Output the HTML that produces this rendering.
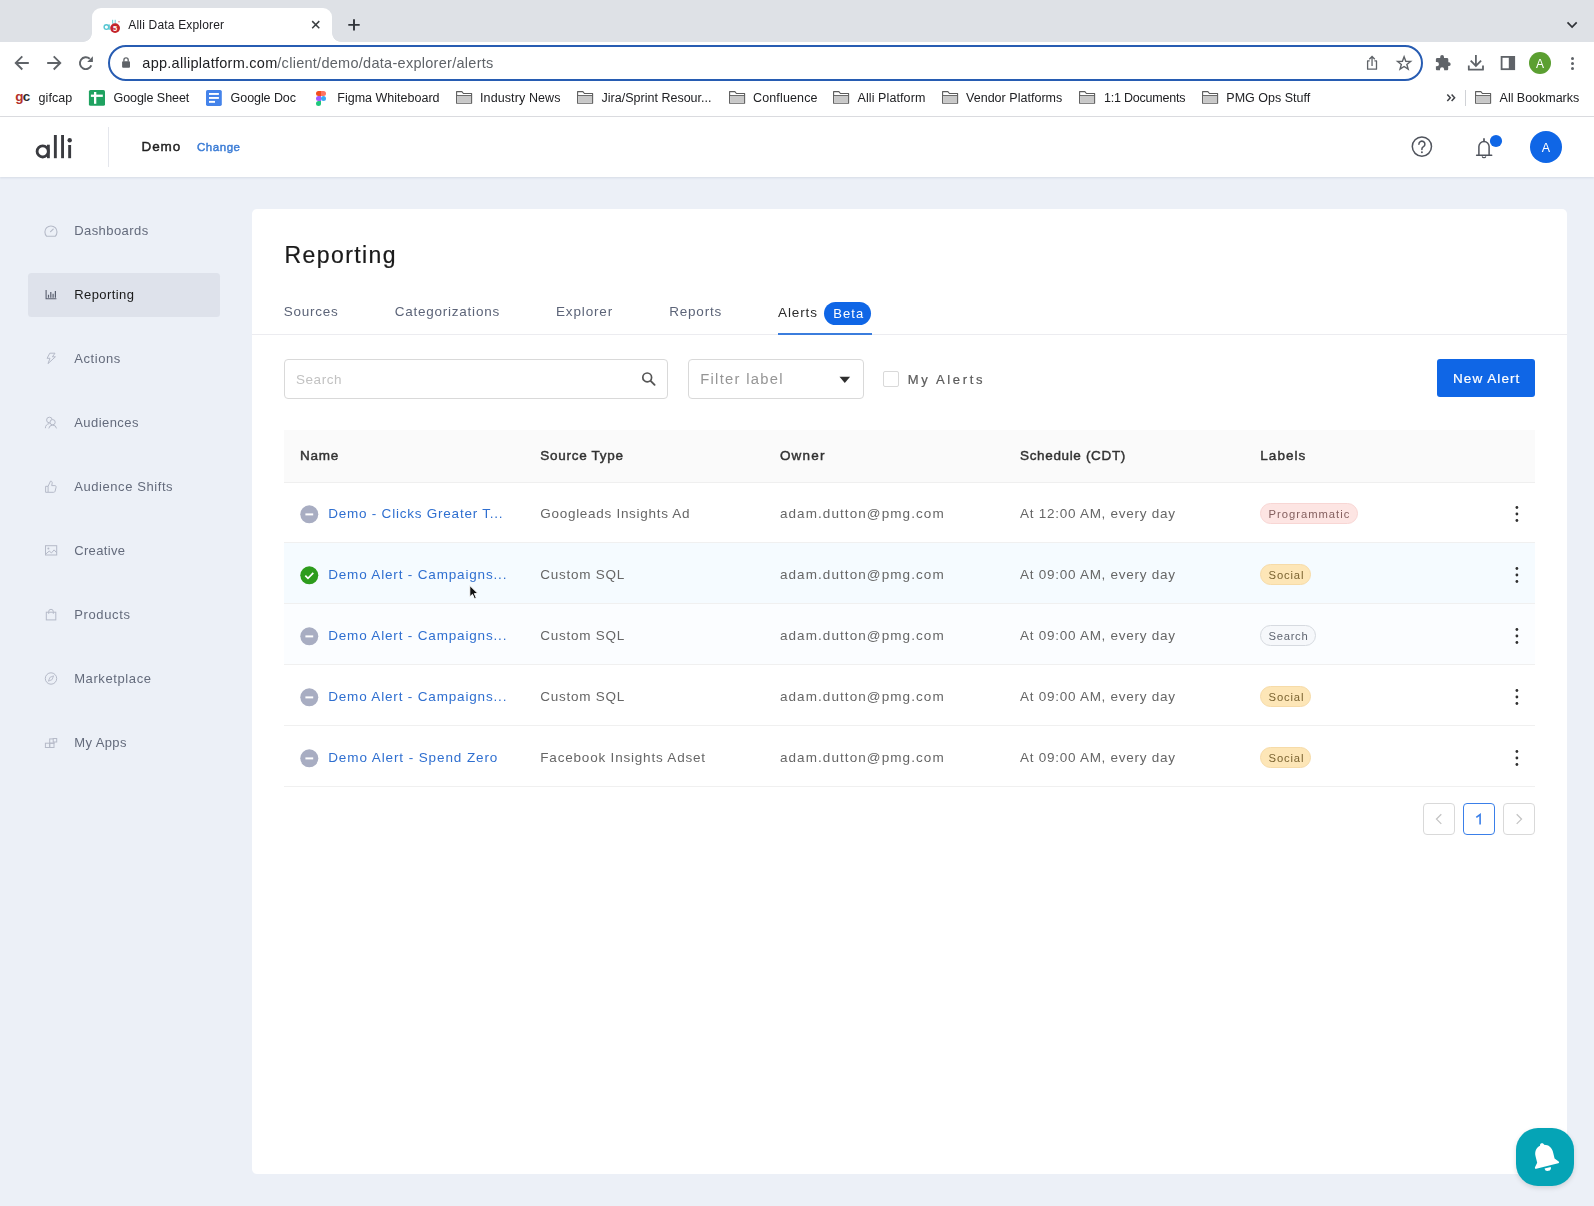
<!DOCTYPE html>
<html><head><meta charset="utf-8">
<style>
*{box-sizing:border-box;margin:0;padding:0}
html,body{width:1594px;height:1206px;overflow:hidden}
body{font-family:"Liberation Sans",sans-serif;background:#ecf0f7;position:relative;color:#202124}
.abs,.t,svg.i{position:absolute}
.t{white-space:pre}
/* chrome */
#tabstrip{left:0;top:0;width:1594px;height:42px;background:#dee1e6}
#tab{left:92px;top:8px;width:240px;height:34px;background:#fff;border-radius:9px 9px 0 0}
#tab:before,#tab:after{content:"";position:absolute;bottom:0;width:9px;height:9px}
#tab:before{left:-9px;background:radial-gradient(circle at 0 0,rgba(255,255,255,0) 8.5px,#fff 9.2px)}
#tab:after{right:-9px;background:radial-gradient(circle at 100% 0,rgba(255,255,255,0) 8.5px,#fff 9.2px)}
#toolbar{left:0;top:41.5px;width:1594px;height:43px;background:#fff}
#omni{left:107.5px;top:45px;width:1315.5px;height:35.5px;border:2px solid #275cb2;border-radius:18px;background:#fff}
#bmbar{left:0;top:84px;width:1594px;height:33px;background:#fff;border-bottom:1px solid #dcdde0}
/* app */
#hdr{left:0;top:117px;width:1594px;height:60px;background:#fff;box-shadow:0 1px 2px rgba(70,85,120,.13)}
#card{left:252px;top:209px;width:1315px;height:964.5px;background:#fff;border-radius:5px}
#sbact{left:28px;top:273px;width:192px;height:44px;background:#dee2eb;border-radius:3.5px}
.box{border:1px solid #d9d9d9;border-radius:4px;background:#fff}
#thead{left:284px;top:429.5px;width:1250.6px;height:53px;background:#fafafa;border-bottom:1px solid #efefef}
.row{left:284px;width:1250.6px;height:61px;border-bottom:1px solid #f0f0f0}
.tag{height:21.6px;border-radius:11px}
#txt{position:absolute;left:0;top:0;width:1594px;height:1206px;will-change:transform}
.pg{width:32px;height:32px;top:802.7px;border:1px solid #d9d9d9;border-radius:4px;background:#fff}
</style></head><body>
<!-- ===== CHROME ===== -->
<div id="tabstrip" class="abs"></div>
<div id="tab" class="abs"></div>
<div id="toolbar" class="abs"></div>
<div id="omni" class="abs"></div>
<div id="bmbar" class="abs"></div>
<svg class="i" style="left:102px;top:14px" width="20" height="20" viewBox="102 14 20 20">
 <circle cx="106.400" cy="27.100" r="2.300" fill="none" stroke="#56c6d2" stroke-width="1.400"/><rect x="108.500" y="24.400" width="1.300" height="5.400" fill="#56c6d2"/>
 <rect x="112" y="19.800" width="1.200" height="4" fill="#7ed4dc"/><rect x="114.600" y="19.800" width="1.200" height="4" fill="#7ed4dc"/><circle cx="119" cy="21.700" r=".75" fill="#d77"/>
 <circle cx="115.100" cy="28.100" r="4.900" fill="#c4242a"/>
 <text x="115.100" y="30.900" font-family="Liberation Sans,sans-serif" font-size="7.500" font-weight="700" fill="#fff" text-anchor="middle">5</text>
</svg>
<svg class="i" style="left:309px;top:18px" width="14" height="14" viewBox="0 0 14 14"><path d="M3.2 3.100l7.100 7.100M10.300 3.100l-7.100 7.100" stroke="#3c4043" stroke-width="1.500" stroke-linecap="butt"/></svg>
<svg class="i" style="left:345.5px;top:17px" width="16" height="16" viewBox="0 0 16 16"><path d="M8 2.200v11.400M2.300 7.900h11.400" stroke="#30343a" stroke-width="1.900"/></svg>
<svg class="i" style="left:1564px;top:18px" width="16" height="14" viewBox="1564 18 16 14"><path d="M1567.500 22.400l4.600 4.600 4.600-4.600" fill="none" stroke="#2f3237" stroke-width="1.700"/></svg>
<svg class="i" style="left:12px;top:53px" width="20" height="20" viewBox="12 53 20 20"><path d="M28.800 62.950h-12.600M22.300 56.400l-6.550 6.550 6.550 6.550" fill="none" stroke="#5f6368" stroke-width="1.900"/></svg>
<svg class="i" style="left:44px;top:53px" width="20" height="20" viewBox="44 53 20 20"><path d="M47.200 62.950h12.600M53.700 56.400l6.550 6.550-6.550 6.550" fill="none" stroke="#5f6368" stroke-width="1.900"/></svg>
<svg class="i" style="left:76px;top:53px" width="20" height="20" viewBox="76 53 20 20"><path d="M91.300 65.400a5.900 5.900 0 1 1-1.500-6.600" fill="none" stroke="#5f6368" stroke-width="1.900"/><path d="M92.900 56.200v5.700h-5.700z" fill="#5f6368"/></svg>
<svg class="i" style="left:120px;top:55px" width="12" height="14" viewBox="120 55 12 14"><rect x="122.100" y="61.200" width="7.900" height="6.600" rx="1" fill="#5f6368"/><path d="M123.900 61.500v-1.500a2.150 2.150 0 0 1 4.300 0v1.500" fill="none" stroke="#5f6368" stroke-width="1.300"/></svg>
<svg class="i" style="left:1364px;top:54px" width="16" height="18" viewBox="1364 54 16 18"><path d="M1369.700 60.900h-2.100v8.300h8.900v-8.300h-2.100" fill="none" stroke="#5f6368" stroke-width="1.300" stroke-linejoin="round"/><path d="M1372.050 66v-9.300M1369.300 59.200l2.750-2.750 2.750 2.750" fill="none" stroke="#5f6368" stroke-width="1.300"/></svg>
<svg class="i" style="left:1395px;top:54px" width="18" height="18" viewBox="1395 54 18 18"><polygon points="1404.10,56.70 1405.80,61.25 1410.66,61.47 1406.86,64.50 1408.16,69.18 1404.10,66.50 1400.04,69.18 1401.34,64.50 1397.54,61.47 1402.40,61.25" fill="none" stroke="#5f6368" stroke-width="1.400" stroke-linejoin="miter"/></svg>
<svg class="i" style="left:1435px;top:54px" width="18" height="18" viewBox="1435 54 18 18"><path fill="#5f6368" d="M1449.300 62.300h-1v-2.900c0-.8-.6-1.400-1.400-1.400h-2.900v-1a1.900 1.900 0 0 0-3.800 0v1h-2.900c-.8 0-1.400.6-1.400 1.400v2.700h1a2.050 2.050 0 0 1 0 4.100h-1v2.700c0 .8.600 1.400 1.400 1.400h2.700v-1a2.050 2.050 0 0 1 4.100 0v1h2.700c.8 0 1.400-.6 1.400-1.400v-2.900h1a1.900 1.900 0 0 0 0-3.700z"/></svg>
<svg class="i" style="left:1466px;top:53px" width="20" height="20" viewBox="1466 53 20 20"><path d="M1475.900 55.100v10.600M1470.700 60.700l5.200 5.200 5.200-5.200" fill="none" stroke="#5f6368" stroke-width="1.800"/><path d="M1468.800 65.600v4.100h14.200v-4.100" fill="none" stroke="#5f6368" stroke-width="1.800" stroke-linejoin="round"/></svg>
<svg class="i" style="left:1499px;top:54px" width="18" height="18" viewBox="1499 54 18 18"><rect x="1501.600" y="56.900" width="12.600" height="12.300" fill="none" stroke="#5f6368" stroke-width="1.800"/><rect x="1508.800" y="56.900" width="5.400" height="12.300" fill="#5f6368"/></svg>
<div class="abs" style="left:1529px;top:51.800px;width:22.200px;height:22.200px;border-radius:50%;background:#5b9f31"></div>
<svg class="i" style="left:1568px;top:54px" width="10" height="18" viewBox="1568 54 10 18"><circle cx="1572.500" cy="58.400" r="1.500" fill="#5f6368"/><circle cx="1572.500" cy="63.500" r="1.500" fill="#5f6368"/><circle cx="1572.500" cy="68.600" r="1.500" fill="#5f6368"/></svg>
<div class="t" style="left:15.200px;top:89.700px;font-size:13.500px;line-height:14px;font-weight:700;letter-spacing:-0.600px;color:#2b2b2b"><span style="color:#b3302b">g</span>c</div>
<svg class="i" style="left:88px;top:89px" width="18" height="18" viewBox="88 89 18 18"><rect x="88.900" y="90" width="16.100" height="15.800" rx="1.600" fill="#1fa260"/><rect x="94" y="92" width="2.300" height="11.800" fill="#fff"/><rect x="90.900" y="94.600" width="11.900" height="2.300" fill="#fff"/></svg>
<svg class="i" style="left:205px;top:89px" width="18" height="18" viewBox="205 89 18 18"><rect x="206" y="89.900" width="15.800" height="16" rx="1.600" fill="#4483ea"/><rect x="209" y="93" width="9.900" height="1.900" fill="#fff"/><rect x="209" y="97" width="9.900" height="1.900" fill="#fff"/><rect x="209" y="100.900" width="6" height="1.900" fill="#fff"/></svg>
<svg class="i" style="left:315px;top:90px" width="12" height="17" viewBox="315 90 12 17">
<path d="M1321 91h-2.500a2.500 2.500 0 0 0 0 5h2.500z" transform="translate(-1000 0)" fill="#f24e1e"/>
<path d="M1321 91h2.500a2.500 2.500 0 0 1 0 5h-2.500z" transform="translate(-1000 0)" fill="#ff7262"/>
<path d="M1321 96h-2.500a2.500 2.500 0 0 0 0 5h2.500z" transform="translate(-1000 0)" fill="#a259ff"/>
<circle cx="323.500" cy="98.500" r="2.500" fill="#3aa8f5"/>
<path d="M1321 101h-2.500a2.500 2.500 0 1 0 2.500 2.500z" transform="translate(-1000 0)" fill="#1fc77c"/>
</svg>
<svg class="i" style="left:455.8px;top:90px" width="17" height="15" viewBox="0 0 17 15"><path d="M.6 13.200v-11.600h5.300l1.500 1.900h8.200v9.700z" fill="#fff" stroke="#5c5c5c" stroke-width="1.100" stroke-linejoin="round"/><rect x="1.150" y="5.700" width="13.900" height="7" fill="#c8c8c8"/><path d="M.6 5.500h15" stroke="#5c5c5c" stroke-width=".9"/></svg>
<svg class="i" style="left:577.0px;top:90px" width="17" height="15" viewBox="0 0 17 15"><path d="M.6 13.200v-11.600h5.300l1.500 1.900h8.200v9.700z" fill="#fff" stroke="#5c5c5c" stroke-width="1.100" stroke-linejoin="round"/><rect x="1.150" y="5.700" width="13.900" height="7" fill="#c8c8c8"/><path d="M.6 5.500h15" stroke="#5c5c5c" stroke-width=".9"/></svg>
<svg class="i" style="left:729.0px;top:90px" width="17" height="15" viewBox="0 0 17 15"><path d="M.6 13.200v-11.600h5.300l1.500 1.900h8.200v9.700z" fill="#fff" stroke="#5c5c5c" stroke-width="1.100" stroke-linejoin="round"/><rect x="1.150" y="5.700" width="13.900" height="7" fill="#c8c8c8"/><path d="M.6 5.500h15" stroke="#5c5c5c" stroke-width=".9"/></svg>
<svg class="i" style="left:833.0px;top:90px" width="17" height="15" viewBox="0 0 17 15"><path d="M.6 13.200v-11.600h5.300l1.500 1.900h8.200v9.700z" fill="#fff" stroke="#5c5c5c" stroke-width="1.100" stroke-linejoin="round"/><rect x="1.150" y="5.700" width="13.900" height="7" fill="#c8c8c8"/><path d="M.6 5.500h15" stroke="#5c5c5c" stroke-width=".9"/></svg>
<svg class="i" style="left:942.0px;top:90px" width="17" height="15" viewBox="0 0 17 15"><path d="M.6 13.200v-11.600h5.300l1.500 1.900h8.200v9.700z" fill="#fff" stroke="#5c5c5c" stroke-width="1.100" stroke-linejoin="round"/><rect x="1.150" y="5.700" width="13.900" height="7" fill="#c8c8c8"/><path d="M.6 5.500h15" stroke="#5c5c5c" stroke-width=".9"/></svg>
<svg class="i" style="left:1079.0px;top:90px" width="17" height="15" viewBox="0 0 17 15"><path d="M.6 13.200v-11.600h5.300l1.500 1.900h8.200v9.700z" fill="#fff" stroke="#5c5c5c" stroke-width="1.100" stroke-linejoin="round"/><rect x="1.150" y="5.700" width="13.900" height="7" fill="#c8c8c8"/><path d="M.6 5.500h15" stroke="#5c5c5c" stroke-width=".9"/></svg>
<svg class="i" style="left:1202.0px;top:90px" width="17" height="15" viewBox="0 0 17 15"><path d="M.6 13.200v-11.600h5.300l1.500 1.900h8.200v9.700z" fill="#fff" stroke="#5c5c5c" stroke-width="1.100" stroke-linejoin="round"/><rect x="1.150" y="5.700" width="13.900" height="7" fill="#c8c8c8"/><path d="M.6 5.500h15" stroke="#5c5c5c" stroke-width=".9"/></svg>
<svg class="i" style="left:1475.0px;top:90px" width="17" height="15" viewBox="0 0 17 15"><path d="M.6 13.200v-11.600h5.300l1.500 1.900h8.200v9.700z" fill="#fff" stroke="#5c5c5c" stroke-width="1.100" stroke-linejoin="round"/><rect x="1.150" y="5.700" width="13.900" height="7" fill="#c8c8c8"/><path d="M.6 5.500h15" stroke="#5c5c5c" stroke-width=".9"/></svg>
<svg class="i" style="left:1445px;top:92px" width="12" height="12" viewBox="1445 92 12 12"><path d="M1447.300 94.500l3 3.300-3 3.300M1451.600 94.500l3 3.300-3 3.300" fill="none" stroke="#3f4247" stroke-width="1.500"/></svg>
<div class="abs" style="left:1465px;top:90.400px;width:1px;height:15.500px;background:#d0d2d6"></div>
<!-- ===== APP ===== -->
<div id="hdr" class="abs"></div>
<div id="card" class="abs"></div>
<div id="sbact" class="abs"></div>
<!-- header logo + divider -->
<svg class="i" style="left:30px;top:130px" width="50" height="34" viewBox="30 130 50 34">
 <circle cx="42.7" cy="151.4" r="5.6" fill="none" stroke="#3a3b40" stroke-width="2.8"/>
 <rect x="47.0" y="144.7" width="2.8" height="13.5" fill="#3a3b40"/>
 <rect x="53.9" y="135" width="2.9" height="23.2" fill="#3a3b40"/>
 <rect x="61.1" y="135" width="2.9" height="23.2" fill="#3a3b40"/>
 <rect x="68.2" y="145" width="2.9" height="13.2" fill="#3a3b40"/>
 <circle cx="69.7" cy="140.2" r="2.2" fill="#3a3b40"/>
</svg>
<div class="abs" style="left:108px;top:127px;width:1px;height:40px;background:#e4e6ec"></div>
<!-- header right icons -->
<svg class="i" style="left:1408px;top:133px" width="28" height="28" viewBox="1408 133 28 28">
 <circle cx="1421.900" cy="146.600" r="9.600" fill="none" stroke="#50545d" stroke-width="1.500"/>
 <path d="M1418.900 144.200a3 3 0 1 1 4.600 2.500c-1 .6-1.600 1.200-1.600 2.300v.6" fill="none" stroke="#50545d" stroke-width="1.500" stroke-linecap="round"/>
 <circle cx="1421.900" cy="152.300" r=".95" fill="#50545d"/>
</svg>
<svg class="i" style="left:1470px;top:132px" width="36" height="30" viewBox="1470 132 36 30">
 <path d="M1476.600 155.300h15.100M1478.900 155.300v-8.700a5.100 5.100 0 0 1 10.200 0v8.700" fill="none" stroke="#50545d" stroke-width="1.500" stroke-linecap="round"/>
 <path d="M1484 141.300v-2.400" stroke="#50545d" stroke-width="1.700" stroke-linecap="round"/>
 <path d="M1482.200 156.300a1.850 1.850 0 0 0 3.600 0" fill="none" stroke="#50545d" stroke-width="1.200"/>
 <circle cx="1496" cy="141" r="6.100" fill="#0f66e6"/>
</svg>
<div class="abs" style="left:1530px;top:131px;width:32px;height:32px;border-radius:50%;background:#0f66e6"></div>

<!-- tabs line, underline, badge -->
<div class="abs" style="left:252px;top:333.5px;width:1315px;height:1px;background:#ececf0"></div>
<div class="abs" style="left:778px;top:332.5px;width:93.5px;height:2px;background:#3b7ddd"></div>
<div class="abs" style="left:824.4px;top:301.8px;width:47px;height:23px;border-radius:12px;background:#0f66e6"></div>

<!-- filters -->
<div class="abs box" style="left:284px;top:358.8px;width:383.8px;height:40px"></div>
<svg class="i" style="left:640px;top:370px" width="18" height="18" viewBox="0 0 18 18">
 <circle cx="7.2" cy="7.4" r="4.4" fill="none" stroke="#555" stroke-width="1.7"/>
 <path d="M10.6 10.8l4 4" stroke="#555" stroke-width="1.9" stroke-linecap="round"/>
</svg>
<div class="abs box" style="left:687.6px;top:358.8px;width:176px;height:40px"></div>
<svg class="i" style="left:838px;top:375px" width="14" height="10" viewBox="0 0 14 10"><path d="M1.5 1.8h10.6l-5.3 6.1z" fill="#2e2e2e"/></svg>
<div class="abs" style="left:883.4px;top:370.8px;width:16px;height:16px;border:1px solid #d9d9d9;border-radius:2px;background:#fff"></div>
<div class="abs" style="left:1437px;top:358.6px;width:98px;height:38px;border-radius:3px;background:#0f66e6"></div>

<!-- table -->
<div id="thead" class="abs"></div>
<div class="abs row" style="top:482px"></div>
<div class="abs row" style="top:543px;background:#f5fbff"></div>
<div class="abs row" style="top:604px;background:#fbfdff"></div>
<div class="abs row" style="top:665px"></div>
<div class="abs row" style="top:726px"></div>
<svg class="i" style="left:299.7px;top:505.1px" width="19" height="19" viewBox="0 0 19 19"><circle cx="9.3" cy="9.3" r="9" fill="#a8adc2"/><path d="M5.400 9.4h7.800" stroke="#fff" stroke-width="2"/></svg>
<div class="abs tag" style="left:1260.3px;top:502.8px;width:97.7px;background:#fde5e3;border:1px solid #f8d6d4"></div>
<svg class="i" style="left:1512px;top:504.3px" width="10" height="20" viewBox="0 0 10 20"><circle cx="4.900" cy="3.500" r="1.400" fill="#303030"/><circle cx="4.900" cy="10" r="1.400" fill="#303030"/><circle cx="4.900" cy="16.500" r="1.400" fill="#303030"/></svg>
<svg class="i" style="left:299.7px;top:566.1px" width="19" height="19" viewBox="0 0 19 19"><circle cx="9.3" cy="9.3" r="9" fill="#2d9c1d"/><path d="M5.3 9.6l2.700 2.700 5.300-5.400" fill="none" stroke="#fff" stroke-width="1.700"/></svg>
<div class="abs tag" style="left:1260.3px;top:563.8px;width:50.7px;background:#fde6b7;border:1px solid #f6dba8"></div>
<svg class="i" style="left:1512px;top:565.3px" width="10" height="20" viewBox="0 0 10 20"><circle cx="4.900" cy="3.500" r="1.400" fill="#303030"/><circle cx="4.900" cy="10" r="1.400" fill="#303030"/><circle cx="4.900" cy="16.500" r="1.400" fill="#303030"/></svg>
<svg class="i" style="left:299.7px;top:627.1px" width="19" height="19" viewBox="0 0 19 19"><circle cx="9.3" cy="9.3" r="9" fill="#a8adc2"/><path d="M5.400 9.4h7.800" stroke="#fff" stroke-width="2"/></svg>
<div class="abs tag" style="left:1260.3px;top:624.8px;width:55.4px;background:#f6f8fb;border:1px solid #d6dae0"></div>
<svg class="i" style="left:1512px;top:626.3px" width="10" height="20" viewBox="0 0 10 20"><circle cx="4.900" cy="3.500" r="1.400" fill="#303030"/><circle cx="4.900" cy="10" r="1.400" fill="#303030"/><circle cx="4.900" cy="16.500" r="1.400" fill="#303030"/></svg>
<svg class="i" style="left:299.7px;top:688.1px" width="19" height="19" viewBox="0 0 19 19"><circle cx="9.3" cy="9.3" r="9" fill="#a8adc2"/><path d="M5.400 9.4h7.800" stroke="#fff" stroke-width="2"/></svg>
<div class="abs tag" style="left:1260.3px;top:685.8px;width:50.7px;background:#fde6b7;border:1px solid #f6dba8"></div>
<svg class="i" style="left:1512px;top:687.3px" width="10" height="20" viewBox="0 0 10 20"><circle cx="4.900" cy="3.500" r="1.400" fill="#303030"/><circle cx="4.900" cy="10" r="1.400" fill="#303030"/><circle cx="4.900" cy="16.500" r="1.400" fill="#303030"/></svg>
<svg class="i" style="left:299.7px;top:749.1px" width="19" height="19" viewBox="0 0 19 19"><circle cx="9.3" cy="9.3" r="9" fill="#a8adc2"/><path d="M5.400 9.4h7.800" stroke="#fff" stroke-width="2"/></svg>
<div class="abs tag" style="left:1260.3px;top:746.8px;width:50.7px;background:#fde6b7;border:1px solid #f6dba8"></div>
<svg class="i" style="left:1512px;top:748.3px" width="10" height="20" viewBox="0 0 10 20"><circle cx="4.900" cy="3.500" r="1.400" fill="#303030"/><circle cx="4.900" cy="10" r="1.400" fill="#303030"/><circle cx="4.900" cy="16.500" r="1.400" fill="#303030"/></svg>
<!-- pagination -->
<div class="abs pg" style="left:1423.3px"></div>
<div class="abs pg" style="left:1462.8px;border-color:#3a7fe9"></div>
<svg class="i" style="left:1470px;top:810px" width="16" height="18" viewBox="1470 810 16 18"><path d="M1476.300 817.400l3.800-2.900v10.100" fill="none" stroke="#3a7fe9" stroke-width="1.600" stroke-linejoin="miter"/></svg>
<div class="abs pg" style="left:1503px"></div>
<svg class="i" style="left:1423.3px;top:802.7px" width="32" height="32" viewBox="0 0 32 32"><path d="M18.3 11.3l-4.8 4.8 4.8 4.8" fill="none" stroke="#c4c4c4" stroke-width="1.3"/></svg>
<svg class="i" style="left:1503px;top:802.7px" width="32" height="32" viewBox="0 0 32 32"><path d="M13.7 11.3l4.8 4.8-4.8 4.8" fill="none" stroke="#c4c4c4" stroke-width="1.3"/></svg>
<!-- FAB -->
<div class="abs" style="left:1516px;top:1128px;width:58px;height:58px;border-radius:22px;background:#05a4b6;box-shadow:0 2px 5px rgba(0,0,0,.13)"></div>
<svg class="i" style="left:1516px;top:1128px" width="58" height="58" viewBox="0 0 58 58">
 <g transform="translate(-0.9 0.5) translate(30 29) scale(1.08) translate(-30 -29) rotate(-14 30 29)" fill="#fff">
  <path d="M30 15.5c1.1 0 1.9.8 1.9 1.8 4 .9 6.4 4.2 6.4 8.4v6.3l3 3.6c.5.7.1 1.6-.8 1.6H19.500c-.9 0-1.300-.9-.8-1.600l3-3.600v-6.300c0-4.200 2.400-7.500 6.400-8.400 0-1 .8-1.800 1.900-1.800z"/>
  <path d="M27 38.700h6a3 3 0 0 1-6 0z"/>
 </g>
</svg>
<svg class="i" style="left:43px;top:222px" width="16" height="17" viewBox="43 222 16 17"><path d="M46.700 236.300a6.050 6.050 0 1 1 8.500 0z" fill="none" stroke="#b5bac8" stroke-width="1.100" stroke-linejoin="round"/><path d="M50.600 231.600l2.600-2.500" stroke="#b5bac8" stroke-width="1.200" stroke-linecap="round"/></svg>
<svg class="i" style="left:43px;top:287px" width="16" height="15" viewBox="43 287 16 15"><path d="M46.100 290v8.800h10.300" fill="none" stroke="#585e6e" stroke-width="1.100"/><path d="M48.500 297.700v-3M50.800 297.700v-5.800M53.100 297.700v-4M55.400 297.700v-6.600" stroke="#585e6e" stroke-width="1.200"/></svg>
<svg class="i" style="left:43px;top:350px" width="16" height="17" viewBox="43 350 16 17"><path d="M49.800 353.200h5.200l-2.600 3.600h3l-7.400 6.800 2-5.300h-2.900z" fill="none" stroke="#b5bac8" stroke-width="1" stroke-linejoin="round"/></svg>
<svg class="i" style="left:43px;top:414px" width="16" height="17" viewBox="43 414 16 17"><circle cx="49.400" cy="420" r="2.800" fill="none" stroke="#b5bac8" stroke-width="1"/><path d="M45.400 428.200a4.300 4.300 0 0 1 4-4.600" fill="none" stroke="#b5bac8" stroke-width="1"/><circle cx="52.600" cy="422.200" r="2.600" fill="#ecf0f7" stroke="#b5bac8" stroke-width="1"/><path d="M48.800 428.400a3.900 3.900 0 0 1 7.700 0" fill="none" stroke="#b5bac8" stroke-width="1"/></svg>
<svg class="i" style="left:43px;top:478px" width="16" height="17" viewBox="43 478 16 17"><path d="M45.600 486.300h2.500v6h-2.500zM48.100 486.300l2.400-5.200c1.300 0 1.900.9 1.700 2l-.5 2.500h3.200c.9 0 1.400.8 1.200 1.600l-1.100 4.200c-.2.600-.7.900-1.300.9h-5.600" fill="none" stroke="#b5bac8" stroke-width="1" stroke-linejoin="round"/></svg>
<svg class="i" style="left:43px;top:543px" width="16" height="15" viewBox="43 543 16 15"><rect x="45.500" y="545.700" width="11.200" height="9.300" fill="none" stroke="#b5bac8" stroke-width="1"/><circle cx="48.400" cy="548.500" r="1" fill="#b5bac8"/><path d="M46 553.800l3.200-2.700 2.300 1.800 2.600-3 2.500 2.800" fill="none" stroke="#b5bac8" stroke-width="1"/></svg>
<svg class="i" style="left:43px;top:607px" width="16" height="16" viewBox="43 607 16 16"><rect x="46.300" y="612.200" width="9.500" height="7.700" fill="none" stroke="#b5bac8" stroke-width="1"/><path d="M48.700 613.800v-2.200a2.300 2.300 0 0 1 4.600 0v2.200" fill="none" stroke="#b5bac8" stroke-width="1"/></svg>
<svg class="i" style="left:43px;top:670px" width="16" height="17" viewBox="43 670 16 17"><circle cx="51" cy="678.500" r="5.700" fill="none" stroke="#b5bac8" stroke-width="1"/><path d="M53.600 675.800l-1.500 3.800-3.700 1.600 1.500-3.800z" fill="none" stroke="#b5bac8" stroke-width=".9" stroke-linejoin="round"/></svg>
<svg class="i" style="left:43px;top:736px" width="16" height="15" viewBox="43 736 16 15"><rect x="45.400" y="743.200" width="4.300" height="4.300" fill="none" stroke="#b5bac8" stroke-width="1"/><rect x="49.700" y="743.200" width="4.300" height="4.300" fill="none" stroke="#b5bac8" stroke-width="1"/><rect x="49.700" y="738.900" width="4.300" height="4.300" fill="none" stroke="#b5bac8" stroke-width="1"/><rect x="53.200" y="738.500" width="3.500" height="3.500" fill="#ecf0f7" stroke="#b5bac8" stroke-width="1"/></svg>
<div id="txt"><div class="t" style="left:128.3px;top:19.00px;font-size:12px;line-height:12px;font-weight:400;color:#202124;letter-spacing:0.182px;">Alli Data Explorer</div>
<div class="t" style="left:142.3px;top:56.00px;font-size:14.5px;line-height:14.5px;font-weight:400;color:#202124;letter-spacing:0.276px;">app.alliplatform.com</div>
<div class="t" style="left:277.3px;top:56.00px;font-size:14.5px;line-height:14.5px;font-weight:400;color:#5f6368;letter-spacing:0.277px;">/client/demo/data-explorer/alerts</div>
<div class="t" style="left:38.6px;top:92.00px;font-size:12.5px;line-height:12.5px;font-weight:400;color:#202124;letter-spacing:0.068px;">gifcap</div>
<div class="t" style="left:113.5px;top:92.00px;font-size:12.5px;line-height:12.5px;font-weight:400;color:#202124;letter-spacing:-0.059px;">Google Sheet</div>
<div class="t" style="left:230.6px;top:92.00px;font-size:12.5px;line-height:12.5px;font-weight:400;color:#202124;letter-spacing:-0.068px;">Google Doc</div>
<div class="t" style="left:337.3px;top:92.00px;font-size:12.5px;line-height:12.5px;font-weight:400;color:#202124;letter-spacing:0.005px;">Figma Whiteboard</div>
<div class="t" style="left:480.0px;top:92.00px;font-size:12.5px;line-height:12.5px;font-weight:400;color:#202124;letter-spacing:0.108px;">Industry News</div>
<div class="t" style="left:601.5px;top:92.00px;font-size:12.5px;line-height:12.5px;font-weight:400;color:#202124;letter-spacing:0.012px;">Jira/Sprint Resour...</div>
<div class="t" style="left:753.0px;top:92.00px;font-size:12.5px;line-height:12.5px;font-weight:400;color:#202124;letter-spacing:0.139px;">Confluence</div>
<div class="t" style="left:857.5px;top:92.00px;font-size:12.5px;line-height:12.5px;font-weight:400;color:#202124;letter-spacing:0.093px;">Alli Platform</div>
<div class="t" style="left:966.0px;top:92.00px;font-size:12.5px;line-height:12.5px;font-weight:400;color:#202124;letter-spacing:0.027px;">Vendor Platforms</div>
<div class="t" style="left:1104.0px;top:92.00px;font-size:12.5px;line-height:12.5px;font-weight:400;color:#202124;letter-spacing:-0.215px;">1:1 Documents</div>
<div class="t" style="left:1226.3px;top:92.00px;font-size:12.5px;line-height:12.5px;font-weight:400;color:#202124;letter-spacing:0.014px;">PMG Ops Stuff</div>
<div class="t" style="left:1499.6px;top:92.00px;font-size:12.5px;line-height:12.5px;font-weight:400;color:#202124;letter-spacing:-0.024px;">All Bookmarks</div>
<div class="t" style="left:141.5px;top:140.00px;font-size:13.5px;line-height:13.5px;font-weight:400;color:#1f1f1f;letter-spacing:0.928px;-webkit-text-stroke:0.45px #1f1f1f;">Demo</div>
<div class="t" style="left:197.0px;top:142.00px;font-size:11.5px;line-height:11.5px;font-weight:400;color:#3a7bd5;letter-spacing:0.541px;-webkit-text-stroke:0.45px #3a7bd5;">Change</div>
<div class="t" style="left:74.2px;top:224.00px;font-size:13px;line-height:13px;font-weight:400;color:#646b7c;letter-spacing:0.432px;">Dashboards</div>
<div class="t" style="left:74.2px;top:288.00px;font-size:13px;line-height:13px;font-weight:400;color:#1a1a1a;letter-spacing:0.428px;">Reporting</div>
<div class="t" style="left:74.2px;top:352.00px;font-size:13px;line-height:13px;font-weight:400;color:#646b7c;letter-spacing:0.577px;">Actions</div>
<div class="t" style="left:74.2px;top:416.00px;font-size:13px;line-height:13px;font-weight:400;color:#646b7c;letter-spacing:0.448px;">Audiences</div>
<div class="t" style="left:74.2px;top:480.00px;font-size:13px;line-height:13px;font-weight:400;color:#646b7c;letter-spacing:0.575px;">Audience Shifts</div>
<div class="t" style="left:74.2px;top:544.00px;font-size:13px;line-height:13px;font-weight:400;color:#646b7c;letter-spacing:0.340px;">Creative</div>
<div class="t" style="left:74.2px;top:608.00px;font-size:13px;line-height:13px;font-weight:400;color:#646b7c;letter-spacing:0.641px;">Products</div>
<div class="t" style="left:74.2px;top:672.00px;font-size:13px;line-height:13px;font-weight:400;color:#646b7c;letter-spacing:0.599px;">Marketplace</div>
<div class="t" style="left:74.2px;top:736.00px;font-size:13px;line-height:13px;font-weight:400;color:#646b7c;letter-spacing:0.407px;">My Apps</div>
<div class="t" style="left:284.6px;top:244.00px;font-size:23px;line-height:23px;font-weight:400;color:#1a1a1a;letter-spacing:1.396px;-webkit-text-stroke:0.22px #1a1a1a;">Reporting</div>
<div class="t" style="left:283.8px;top:305.00px;font-size:13.5px;line-height:13.5px;font-weight:400;color:#5c6478;letter-spacing:0.745px;">Sources</div>
<div class="t" style="left:394.7px;top:305.00px;font-size:13.5px;line-height:13.5px;font-weight:400;color:#5c6478;letter-spacing:0.763px;">Categorizations</div>
<div class="t" style="left:556.0px;top:305.00px;font-size:13.5px;line-height:13.5px;font-weight:400;color:#5c6478;letter-spacing:0.846px;">Explorer</div>
<div class="t" style="left:669.3px;top:305.00px;font-size:13.5px;line-height:13.5px;font-weight:400;color:#5c6478;letter-spacing:0.770px;">Reports</div>
<div class="t" style="left:778.0px;top:306.00px;font-size:13.5px;line-height:13.5px;font-weight:400;color:#2b2b2b;letter-spacing:0.897px;">Alerts</div>
<div class="t" style="left:833.2px;top:307.00px;font-size:13px;line-height:13px;font-weight:400;color:#ffffff;letter-spacing:1.117px;">Beta</div>
<div class="t" style="left:296.0px;top:373.00px;font-size:13.5px;line-height:13.5px;font-weight:400;color:#c2c2c2;letter-spacing:0.544px;">Search</div>
<div class="t" style="left:700.2px;top:372.00px;font-size:14.75px;line-height:14.75px;font-weight:400;color:#959595;letter-spacing:1.305px;">Filter label</div>
<div class="t" style="left:907.7px;top:373.00px;font-size:13px;line-height:13px;font-weight:400;color:#5c5c5c;letter-spacing:2.666px;-webkit-text-stroke:0.22px #5c5c5c;">My Alerts</div>
<div class="t" style="left:1453.0px;top:372.00px;font-size:13.5px;line-height:13.5px;font-weight:400;color:#ffffff;letter-spacing:1.065px;-webkit-text-stroke:0.22px #ffffff;">New Alert</div>
<div class="t" style="left:300.1px;top:449.00px;font-size:13.5px;line-height:13.5px;font-weight:400;color:#333333;letter-spacing:0.728px;-webkit-text-stroke:0.45px #333333;">Name</div>
<div class="t" style="left:540.3px;top:449.00px;font-size:13.5px;line-height:13.5px;font-weight:400;color:#333333;letter-spacing:0.714px;-webkit-text-stroke:0.45px #333333;">Source Type</div>
<div class="t" style="left:779.9px;top:449.00px;font-size:13.5px;line-height:13.5px;font-weight:400;color:#333333;letter-spacing:1.184px;-webkit-text-stroke:0.45px #333333;">Owner</div>
<div class="t" style="left:1020.0px;top:449.00px;font-size:13.5px;line-height:13.5px;font-weight:400;color:#333333;letter-spacing:0.655px;-webkit-text-stroke:0.45px #333333;">Schedule (CDT)</div>
<div class="t" style="left:1260.3px;top:449.00px;font-size:13.5px;line-height:13.5px;font-weight:400;color:#333333;letter-spacing:1.041px;-webkit-text-stroke:0.45px #333333;">Labels</div>
<div class="t" style="left:328.2px;top:507.00px;font-size:13.5px;line-height:13.5px;font-weight:400;color:#2f6fd0;letter-spacing:0.774px;">Demo - Clicks Greater T...</div>
<div class="t" style="left:540.3px;top:507.00px;font-size:13.5px;line-height:13.5px;font-weight:400;color:#666666;letter-spacing:0.710px;">Googleads Insights Ad</div>
<div class="t" style="left:779.9px;top:507.00px;font-size:13.5px;line-height:13.5px;font-weight:400;color:#666666;letter-spacing:1.084px;">adam.dutton@pmg.com</div>
<div class="t" style="left:1020.0px;top:507.00px;font-size:13.5px;line-height:13.5px;font-weight:400;color:#666666;letter-spacing:0.734px;">At 12:00 AM, every day</div>
<div class="t" style="left:328.2px;top:568.00px;font-size:13.5px;line-height:13.5px;font-weight:400;color:#2f6fd0;letter-spacing:0.829px;">Demo Alert - Campaigns...</div>
<div class="t" style="left:540.3px;top:568.00px;font-size:13.5px;line-height:13.5px;font-weight:400;color:#666666;letter-spacing:0.747px;">Custom SQL</div>
<div class="t" style="left:779.9px;top:568.00px;font-size:13.5px;line-height:13.5px;font-weight:400;color:#666666;letter-spacing:1.084px;">adam.dutton@pmg.com</div>
<div class="t" style="left:1020.0px;top:568.00px;font-size:13.5px;line-height:13.5px;font-weight:400;color:#666666;letter-spacing:0.734px;">At 09:00 AM, every day</div>
<div class="t" style="left:328.2px;top:629.00px;font-size:13.5px;line-height:13.5px;font-weight:400;color:#2f6fd0;letter-spacing:0.829px;">Demo Alert - Campaigns...</div>
<div class="t" style="left:540.3px;top:629.00px;font-size:13.5px;line-height:13.5px;font-weight:400;color:#666666;letter-spacing:0.747px;">Custom SQL</div>
<div class="t" style="left:779.9px;top:629.00px;font-size:13.5px;line-height:13.5px;font-weight:400;color:#666666;letter-spacing:1.084px;">adam.dutton@pmg.com</div>
<div class="t" style="left:1020.0px;top:629.00px;font-size:13.5px;line-height:13.5px;font-weight:400;color:#666666;letter-spacing:0.734px;">At 09:00 AM, every day</div>
<div class="t" style="left:328.2px;top:690.00px;font-size:13.5px;line-height:13.5px;font-weight:400;color:#2f6fd0;letter-spacing:0.829px;">Demo Alert - Campaigns...</div>
<div class="t" style="left:540.3px;top:690.00px;font-size:13.5px;line-height:13.5px;font-weight:400;color:#666666;letter-spacing:0.747px;">Custom SQL</div>
<div class="t" style="left:779.9px;top:690.00px;font-size:13.5px;line-height:13.5px;font-weight:400;color:#666666;letter-spacing:1.084px;">adam.dutton@pmg.com</div>
<div class="t" style="left:1020.0px;top:690.00px;font-size:13.5px;line-height:13.5px;font-weight:400;color:#666666;letter-spacing:0.734px;">At 09:00 AM, every day</div>
<div class="t" style="left:328.2px;top:751.00px;font-size:13.5px;line-height:13.5px;font-weight:400;color:#2f6fd0;letter-spacing:0.903px;">Demo Alert - Spend Zero</div>
<div class="t" style="left:540.3px;top:751.00px;font-size:13.5px;line-height:13.5px;font-weight:400;color:#666666;letter-spacing:0.805px;">Facebook Insights Adset</div>
<div class="t" style="left:779.9px;top:751.00px;font-size:13.5px;line-height:13.5px;font-weight:400;color:#666666;letter-spacing:1.084px;">adam.dutton@pmg.com</div>
<div class="t" style="left:1020.0px;top:751.00px;font-size:13.5px;line-height:13.5px;font-weight:400;color:#666666;letter-spacing:0.734px;">At 09:00 AM, every day</div>
<div class="t" style="left:1268.6px;top:509.00px;font-size:11.25px;line-height:11.25px;font-weight:400;color:#85605f;letter-spacing:0.970px;">Programmatic</div>
<div class="t" style="left:1268.6px;top:570.00px;font-size:11.25px;line-height:11.25px;font-weight:400;color:#7a6330;letter-spacing:0.829px;">Social</div>
<div class="t" style="left:1268.6px;top:631.00px;font-size:11.25px;line-height:11.25px;font-weight:400;color:#5f6570;letter-spacing:0.689px;">Search</div>
<div class="t" style="left:1268.6px;top:692.00px;font-size:11.25px;line-height:11.25px;font-weight:400;color:#7a6330;letter-spacing:0.829px;">Social</div>
<div class="t" style="left:1268.6px;top:753.00px;font-size:11.25px;line-height:11.25px;font-weight:400;color:#7a6330;letter-spacing:0.829px;">Social</div>
<div class="t" style="left:1541.8px;top:142.00px;font-size:12.5px;line-height:12.5px;font-weight:400;color:#ffffff;letter-spacing:0.000px;">A</div>
<div class="t" style="left:1536.0px;top:58.00px;font-size:12px;line-height:12px;font-weight:400;color:#ffffff;letter-spacing:0.000px;">A</div></div>
<svg class="i" style="left:467px;top:582.6px" width="16" height="20" viewBox="0 0 16 20"><g transform="translate(2.8 2.5) scale(.93) translate(-2.8 -2.3)"><path d="M2.800 2.300v12.200l2.900-2.700 2.100 4.800 2-.9-2.100-4.700h3.900z" fill="#111" stroke="#fff" stroke-width="1" stroke-linejoin="round"/></g></svg>

</body></html>
